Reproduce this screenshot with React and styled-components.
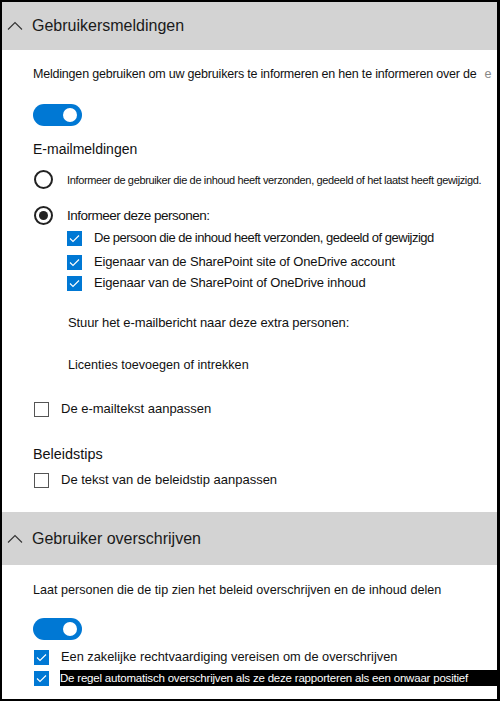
import React from 'react';
import styled, { createGlobalStyle } from 'styled-components';

const GlobalStyle = createGlobalStyle`
  html, body { margin: 0; padding: 0; background: #fff; }
  body { font-family: "Liberation Sans", Arial, sans-serif; color: #111; }
`;

const Frame = styled.div`
  width: 500px;
  height: 701px;
  box-sizing: border-box;
  border: 2px solid #000;
  border-right-width: 3px;
  overflow: hidden;
  background: #fff;
`;

const SectionHeader = styled.div`
  height: ${p => p.$h}px;
  margin-top: ${p => p.$top || 0}px;
  background: #d3d3d3;
  display: flex;
  align-items: center;
  padding-left: 5px;
  gap: 9px;
  font-size: 16px;
  color: #1a1a1a;
`;

const Body = styled.div`
  padding-left: 31px;
  display: flex;
  flex-direction: column;
`;

const Text = styled.div`
  font-size: ${p => p.$size || 13}px;
  margin-top: ${p => p.$top || 0}px;
  margin-left: ${p => p.$left || 0}px;
  white-space: nowrap;
  letter-spacing: ${p => p.$ls || 0}px;
  line-height: 18px;
`;

const Fade = styled.span`
  color: #888;
  margin-left: 8px;
`;

const Toggle = styled.div`
  width: 49px;
  height: 22px;
  border-radius: 11px;
  background: #0078d4;
  margin-top: ${p => p.$top || 0}px;
  position: relative;
  &::after {
    content: '';
    position: absolute;
    right: 5px;
    top: 4px;
    width: 14px;
    height: 14px;
    border-radius: 50%;
    background: #fff;
  }
`;

const Row = styled.div`
  display: flex;
  align-items: center;
  margin-top: ${p => p.$top || 0}px;
  margin-left: ${p => p.$left || 0}px;
  gap: ${p => p.$gap || 12}px;
`;

const Radio = styled.div`
  width: 15px;
  height: 15px;
  border: 2px solid #222;
  border-radius: 50%;
  flex: none;
  display: flex;
  align-items: center;
  justify-content: center;
  &::after {
    content: '';
    display: ${p => (p.$on ? 'block' : 'none')};
    width: 9px;
    height: 9px;
    border-radius: 50%;
    background: #222;
  }
`;

const Box = styled.div`
  width: ${p => (p.$on ? 15 : 13)}px;
  height: ${p => (p.$on ? 15 : 13)}px;
  flex: none;
  background: ${p => (p.$on ? '#0078d4' : '#fff')};
  border: ${p => (p.$on ? 'none' : '1px solid #555')};
  display: flex;
  align-items: center;
  justify-content: center;
`;

const Highlight = styled.div`
  background: #000;
  color: #fff;
  font-size: 11.5px;
  letter-spacing: -0.2px;
  line-height: 16px;
  white-space: nowrap;
  flex: 1;
`;

function Chevron() {
  return (
    <svg width="16" height="10" viewBox="0 0 16 10">
      <path d="M1 8.5 L8 1.5 L15 8.5" fill="none" stroke="#333" strokeWidth="1.1" />
    </svg>
  );
}

function Check({ on }) {
  return (
    <Box $on={on}>
      {on && (
        <svg width="11" height="9" viewBox="0 0 11 9">
          <path d="M1 4.5 L4 7.5 L10 1.5" fill="none" stroke="#fff" strokeWidth="1.1" />
        </svg>
      )}
    </Box>
  );
}

export default function App() {
  return (
    <>
      <GlobalStyle />
      <Frame>
        <SectionHeader $h={48}>
          <Chevron />
          <span>Gebruikersmeldingen</span>
        </SectionHeader>
        <Body>
          <Text $size={12.5} $ls={-0.2} $top={15}>
            Meldingen gebruiken om uw gebruikers te informeren en hen te informeren over de<Fade>e</Fade>
          </Text>
          <Toggle $top={21} />
          <Text $size={14} $top={14}>E-mailmeldingen</Text>
          <Row $top={12} $left={1} $gap={14}>
            <Radio />
            <Text $size={11} $ls={-0.35}>
              Informeer de gebruiker die de inhoud heeft verzonden, gedeeld of het laatst heeft gewijzigd.
            </Text>
          </Row>
          <Row $top={17} $left={1} $gap={14}>
            <Radio $on />
            <Text $size={13.5} $ls={-0.5}>Informeer deze personen:</Text>
          </Row>
          <Row $top={4} $left={34} $gap={12}>
            <Check on />
            <Text $ls={-0.5}>De persoon die de inhoud heeft verzonden, gedeeld of gewijzigd</Text>
          </Row>
          <Row $top={6} $left={34} $gap={12}>
            <Check on />
            <Text $ls={-0.15}>Eigenaar van de SharePoint site of OneDrive account</Text>
          </Row>
          <Row $top={3} $left={34} $gap={12}>
            <Check on />
            <Text $ls={-0.15}>Eigenaar van de SharePoint of OneDrive inhoud</Text>
          </Row>
          <Text $left={35} $top={22} $ls={-0.1}>Stuur het e-mailbericht naar deze extra personen:</Text>
          <Text $size={12.6} $left={35} $top={24}>Licenties toevoegen of intrekken</Text>
          <Row $top={26} $left={1} $gap={12}>
            <Check />
            <Text>De e-mailtekst aanpassen</Text>
          </Row>
          <Text $size={14.4} $top={27}>Beleidstips</Text>
          <Row $top={8} $left={1} $gap={12}>
            <Check />
            <Text>De tekst van de beleidstip aanpassen</Text>
          </Row>
        </Body>
        <SectionHeader $h={53} $top={23}>
          <Chevron />
          <span>Gebruiker overschrijven</span>
        </SectionHeader>
        <Body>
          <Text $size={12.6} $top={16}>Laat personen die de tip zien het beleid overschrijven en de inhoud delen</Text>
          <Toggle $top={19} />
          <Row $top={8} $left={1} $gap={12}>
            <Check on />
            <Text $size={12.8}>Een zakelijke rechtvaardiging vereisen om de overschrijven</Text>
          </Row>
          <Row $top={4} $left={1} $gap={11}>
            <Check on />
            <Highlight>De regel automatisch overschrijven als ze deze rapporteren als een onwaar positief</Highlight>
          </Row>
        </Body>
      </Frame>
    </>
  );
}
